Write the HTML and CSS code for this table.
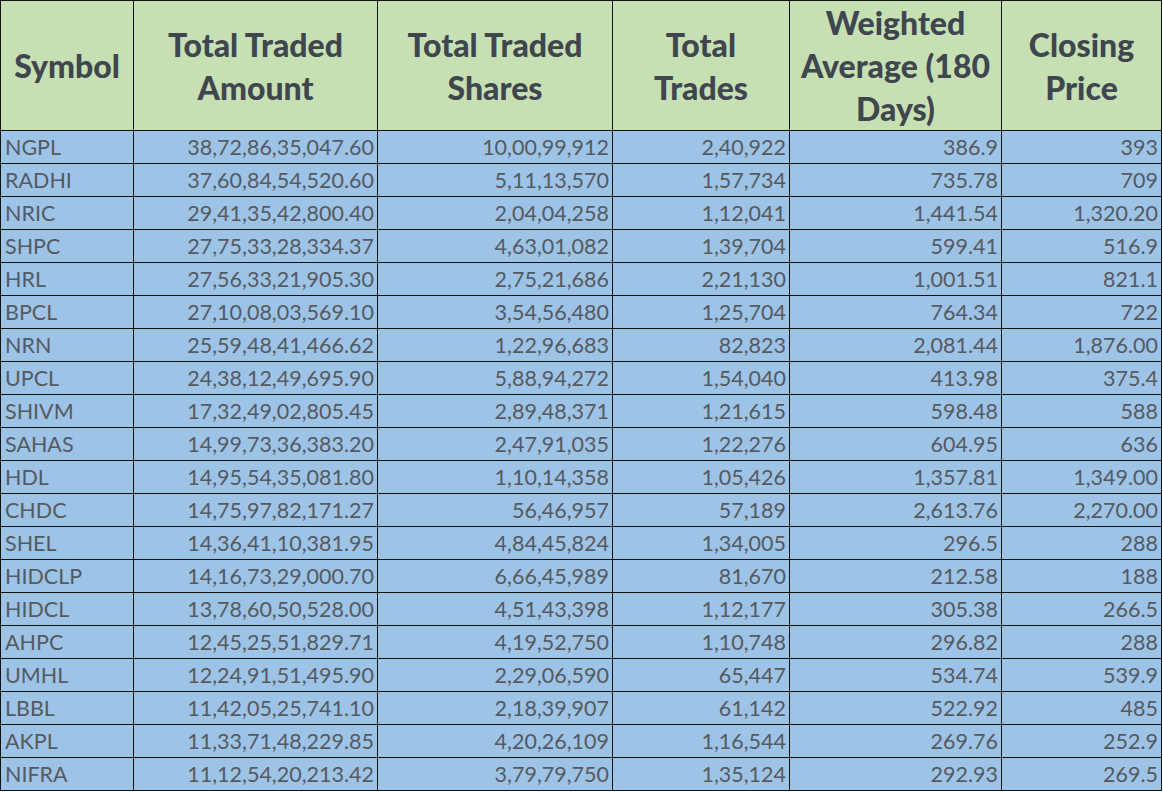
FILE: index.html
```html
<!DOCTYPE html>
<html>
<head>
<meta charset="utf-8">
<link rel="stylesheet" href="styles.css">
</head>
<body>
<table class="grid">
  <colgroup>
    <col class="c1"><col class="c2"><col class="c3"><col class="c4"><col class="c5"><col class="c6">
  </colgroup>
  <thead>
    <tr>
      <th>Symbol</th>
      <th>Total Traded Amount</th>
      <th>Total Traded Shares</th>
      <th>Total<br>Trades</th>
      <th>Weighted Average (180 Days)</th>
      <th>Closing<br>Price</th>
    </tr>
  </thead>
  <tbody>
    <tr><td>NGPL</td><td>38,72,86,35,047.60</td><td>10,00,99,912</td><td>2,40,922</td><td>386.9</td><td>393</td></tr>
    <tr><td>RADHI</td><td>37,60,84,54,520.60</td><td>5,11,13,570</td><td>1,57,734</td><td>735.78</td><td>709</td></tr>
    <tr><td>NRIC</td><td>29,41,35,42,800.40</td><td>2,04,04,258</td><td>1,12,041</td><td>1,441.54</td><td>1,320.20</td></tr>
    <tr><td>SHPC</td><td>27,75,33,28,334.37</td><td>4,63,01,082</td><td>1,39,704</td><td>599.41</td><td>516.9</td></tr>
    <tr><td>HRL</td><td>27,56,33,21,905.30</td><td>2,75,21,686</td><td>2,21,130</td><td>1,001.51</td><td>821.1</td></tr>
    <tr><td>BPCL</td><td>27,10,08,03,569.10</td><td>3,54,56,480</td><td>1,25,704</td><td>764.34</td><td>722</td></tr>
    <tr><td>NRN</td><td>25,59,48,41,466.62</td><td>1,22,96,683</td><td>82,823</td><td>2,081.44</td><td>1,876.00</td></tr>
    <tr><td>UPCL</td><td>24,38,12,49,695.90</td><td>5,88,94,272</td><td>1,54,040</td><td>413.98</td><td>375.4</td></tr>
    <tr><td>SHIVM</td><td>17,32,49,02,805.45</td><td>2,89,48,371</td><td>1,21,615</td><td>598.48</td><td>588</td></tr>
    <tr><td>SAHAS</td><td>14,99,73,36,383.20</td><td>2,47,91,035</td><td>1,22,276</td><td>604.95</td><td>636</td></tr>
    <tr><td>HDL</td><td>14,95,54,35,081.80</td><td>1,10,14,358</td><td>1,05,426</td><td>1,357.81</td><td>1,349.00</td></tr>
    <tr><td>CHDC</td><td>14,75,97,82,171.27</td><td>56,46,957</td><td>57,189</td><td>2,613.76</td><td>2,270.00</td></tr>
    <tr><td>SHEL</td><td>14,36,41,10,381.95</td><td>4,84,45,824</td><td>1,34,005</td><td>296.5</td><td>288</td></tr>
    <tr><td>HIDCLP</td><td>14,16,73,29,000.70</td><td>6,66,45,989</td><td>81,670</td><td>212.58</td><td>188</td></tr>
    <tr><td>HIDCL</td><td>13,78,60,50,528.00</td><td>4,51,43,398</td><td>1,12,177</td><td>305.38</td><td>266.5</td></tr>
    <tr><td>AHPC</td><td>12,45,25,51,829.71</td><td>4,19,52,750</td><td>1,10,748</td><td>296.82</td><td>288</td></tr>
    <tr><td>UMHL</td><td>12,24,91,51,495.90</td><td>2,29,06,590</td><td>65,447</td><td>534.74</td><td>539.9</td></tr>
    <tr><td>LBBL</td><td>11,42,05,25,741.10</td><td>2,18,39,907</td><td>61,142</td><td>522.92</td><td>485</td></tr>
    <tr><td>AKPL</td><td>11,33,71,48,229.85</td><td>4,20,26,109</td><td>1,16,544</td><td>269.76</td><td>252.9</td></tr>
    <tr><td>NIFRA</td><td>11,12,54,20,213.42</td><td>3,79,79,750</td><td>1,35,124</td><td>292.93</td><td>269.5</td></tr>
  </tbody>
</table>
</body>
</html>
```
FILE: styles.css
```css
html, body {
  margin: 0;
  padding: 0;
  background: #ffffff;
}
.grid {
  border-collapse: collapse;
  table-layout: fixed;
  width: 1162px;
  font-family: "Lato", "Open Sans", sans-serif;
}
.c1 { width: 133px; }
.c2 { width: 244px; }
.c3 { width: 235px; }
.c4 { width: 177px; }
.c5 { width: 212px; }
.c6 { width: 160px; }
.grid th {
  background: #c6e0b4;
  color: #40464e;
  font-size: 32px;
  font-weight: 900;
  line-height: 43px;
  height: 129px;
  padding: 0 4px;
  border: 1px solid #111;
  text-align: center;
  vertical-align: middle;
  box-sizing: border-box;
}
.grid td {
  background: #9dc3e6;
  color: #555a60;
  font-size: 21.5px;
  height: 33px;
  padding: 0 3px 0 4px;
  border: 1px solid #111;
  text-align: right;
  box-sizing: border-box;
  white-space: nowrap;
  line-height: 32px;
}
.grid td:first-child {
  text-align: left;
}
```
